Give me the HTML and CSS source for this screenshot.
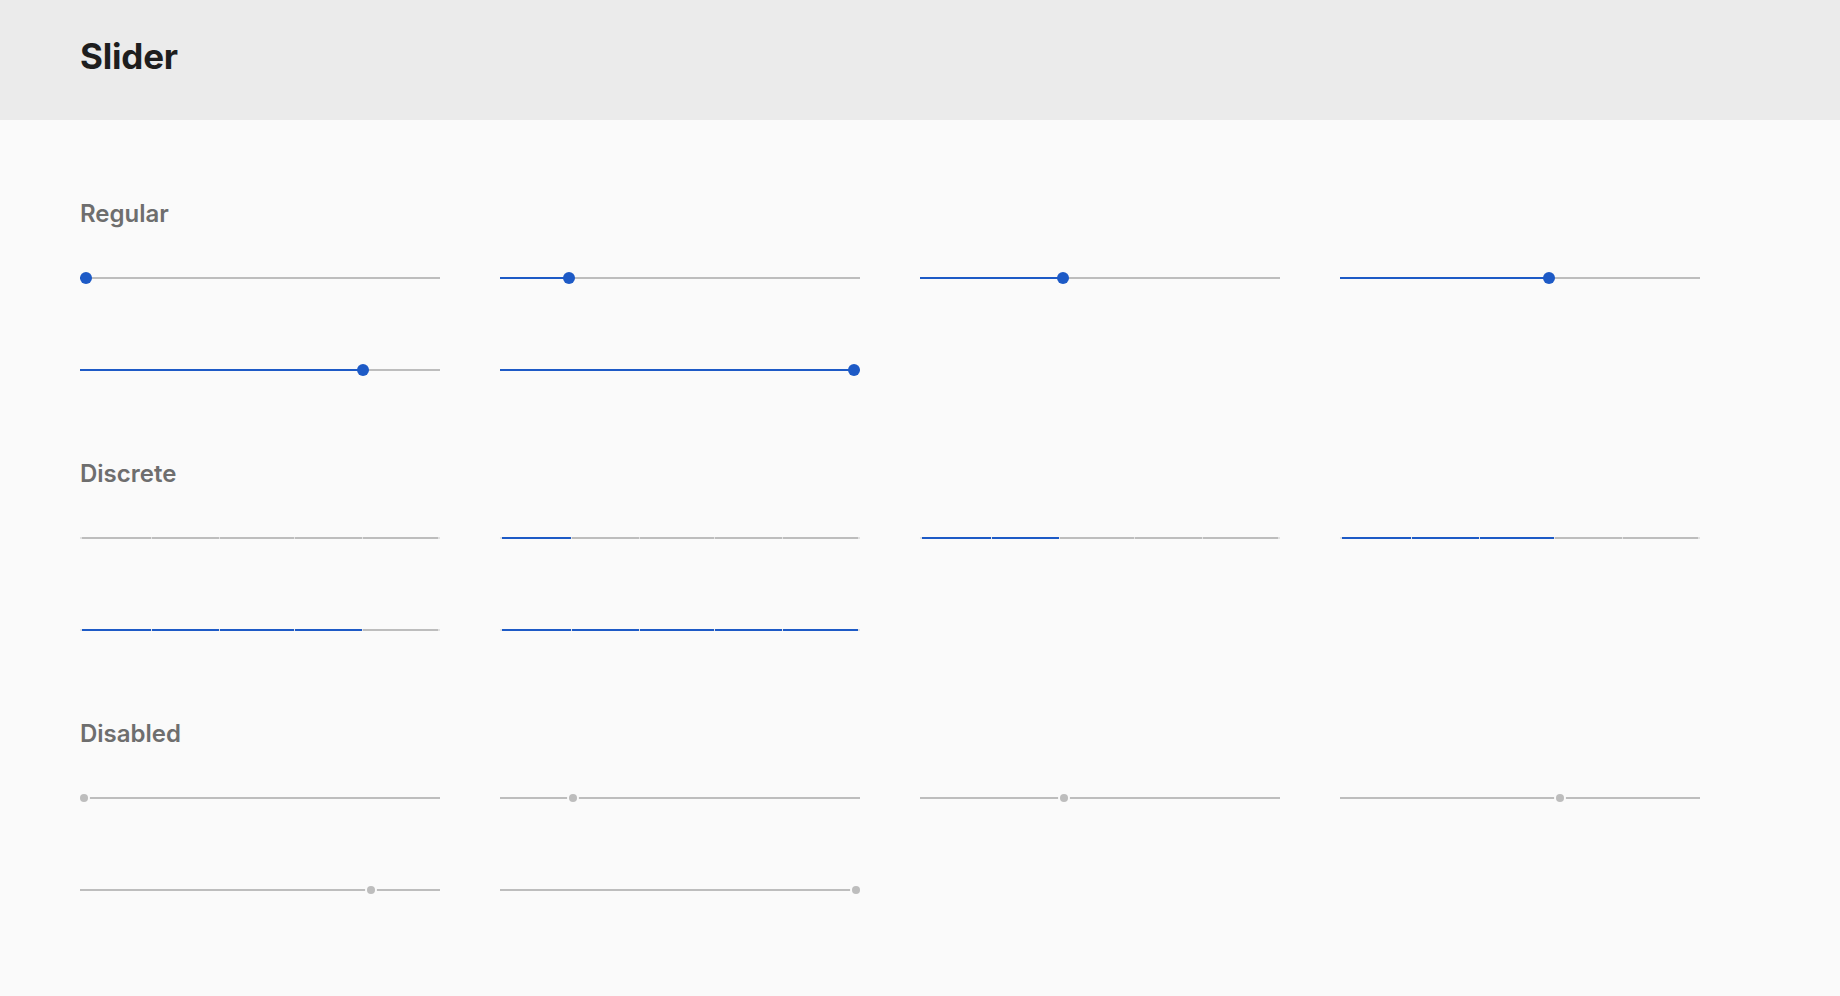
FILE: index.html
```html
<!DOCTYPE html>
<html lang="en">
<head>
<meta charset="utf-8">
<title>Slider</title>
<link rel="stylesheet" href="styles.css">
</head>
<body>
<header class="page-header">
  <h1 class="page-title">Slider</h1>
</header>
<main class="page-main">
  <section class="group">
    <h2 class="group-title">Regular</h2>
    <div class="grid">
      <div class="slider"><div class="rail"><div class="fill" style="width:6px"></div></div><span class="thumb" style="left:0px"></span></div>
      <div class="slider"><div class="rail"><div class="fill" style="width:69px"></div></div><span class="thumb" style="left:63px"></span></div>
      <div class="slider"><div class="rail"><div class="fill" style="width:143px"></div></div><span class="thumb" style="left:137px"></span></div>
      <div class="slider"><div class="rail"><div class="fill" style="width:209px"></div></div><span class="thumb" style="left:203px"></span></div>
      <div class="slider"><div class="rail"><div class="fill" style="width:283px"></div></div><span class="thumb" style="left:277px"></span></div>
      <div class="slider"><div class="rail"><div class="fill" style="width:354px"></div></div><span class="thumb" style="left:348px"></span></div>
    </div>
  </section>

  <section class="group">
    <h2 class="group-title">Discrete</h2>
    <div class="grid">
      <div class="slider"><div class="steps"><span class="step"></span><span class="step"></span><span class="step"></span><span class="step"></span><span class="step"></span></div></div>
      <div class="slider"><div class="steps"><span class="step on"></span><span class="step"></span><span class="step"></span><span class="step"></span><span class="step"></span></div></div>
      <div class="slider"><div class="steps"><span class="step on"></span><span class="step on"></span><span class="step"></span><span class="step"></span><span class="step"></span></div></div>
      <div class="slider"><div class="steps"><span class="step on"></span><span class="step on"></span><span class="step on"></span><span class="step"></span><span class="step"></span></div></div>
      <div class="slider"><div class="steps"><span class="step on"></span><span class="step on"></span><span class="step on"></span><span class="step on"></span><span class="step"></span></div></div>
      <div class="slider"><div class="steps"><span class="step on"></span><span class="step on"></span><span class="step on"></span><span class="step on"></span><span class="step on"></span></div></div>
    </div>
  </section>

  <section class="group">
    <h2 class="group-title">Disabled</h2>
    <div class="grid">
      <div class="slider is-disabled"><div class="rail"></div><span class="thumb" style="left:0px"></span></div>
      <div class="slider is-disabled"><div class="rail"></div><span class="thumb" style="left:69px"></span></div>
      <div class="slider is-disabled"><div class="rail"></div><span class="thumb" style="left:140px"></span></div>
      <div class="slider is-disabled"><div class="rail"></div><span class="thumb" style="left:216px"></span></div>
      <div class="slider is-disabled"><div class="rail"></div><span class="thumb" style="left:287px"></span></div>
      <div class="slider is-disabled"><div class="rail"></div><span class="thumb" style="left:352px"></span></div>
    </div>
  </section>
</main>
</body>
</html>
```

FILE: styles.css
```css
* {
  box-sizing: border-box;
}

html,
body {
  margin: 0;
  padding: 0;
}

body {
  background: #fafafa;
  font-family: Inter, "Noto Sans", "Liberation Sans", sans-serif;
  color: #1e1e1e;
  min-height: 996px;
}

.page-header {
  height: 120px;
  background: #ebebeb;
  padding: 0 80px 8px;
  display: flex;
  align-items: center;
}

.page-title {
  margin: 0;
  font-size: 35px;
  font-weight: 700;
  line-height: 44px;
  color: #1e1e1e;
  letter-spacing: -0.2px;
}

.page-main {
  padding: 80px 80px 0;
  display: flex;
  flex-direction: column;
  gap: 84px;
}

.group {
  display: flex;
  flex-direction: column;
  gap: 44px;
}

.group-title {
  margin: 0;
  font-size: 24px;
  line-height: 28px;
  font-weight: 600;
  color: #6e6e6e;
}

.grid {
  display: grid;
  grid-template-columns: repeat(4, 360px);
  column-gap: 60px;
  row-gap: 80px;
}

.slider {
  position: relative;
  height: 12px;
  display: flex;
  align-items: center;
}

.rail {
  width: 100%;
  height: 2px;
  background: #bdbdbd;
  display: flex;
}

.fill {
  height: 2px;
  background: #1d5ac6;
}

.thumb {
  position: absolute;
  top: 0;
  width: 12px;
  height: 12px;
  border-radius: 50%;
  background: #1d5ac6;
}

.is-disabled .thumb {
  top: 2px;
  width: 8px;
  height: 8px;
  background: #bdbdbd;
  box-shadow: 0 0 0 2px #fafafa;
}

.steps {
  width: 100%;
  height: 2px;
  padding: 0 2px;
  background: #e2e2e2;
  display: grid;
  grid-template-columns: 68.5fr 67.5fr 73fr 67.5fr 74.5fr;
  column-gap: 1px;
}

.step {
  height: 2px;
  background: #bdbdbd;
}

.step.on {
  background: #1d5ac6;
}
```
